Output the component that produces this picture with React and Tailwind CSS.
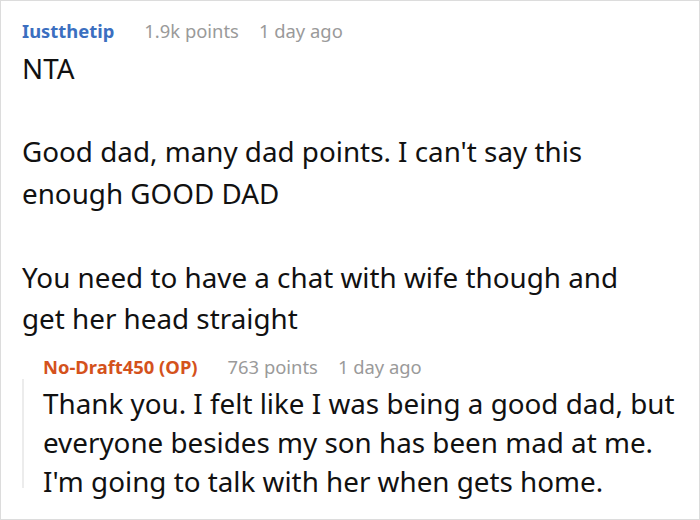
export default function App() {
  return (
    <div className="w-[700px] h-[520px] bg-white border border-[#dcdcdc] box-border overflow-hidden" style={{ fontFamily: '"Noto Sans", "Open Sans", sans-serif' }}>
      <div className="pl-[21px] pt-[16px]">
        <div className="flex items-baseline text-[18.4px] leading-[28px]">
          <span className="font-bold text-[#3b6fc0]">Iustthetip</span>
          <span className="ml-[30px] text-[#9a9a9a]">1.9k points</span>
          <span className="ml-[20px] text-[#9a9a9a]">1 day ago</span>
        </div>
        <div className="text-[27.8px] leading-[41.7px] text-[#111] mt-[3px]">
          <p>NTA</p>
          <p>&nbsp;</p>
          <p>Good dad, many dad points. I can't say this<br />enough GOOD DAD</p>
          <p>&nbsp;</p>
          <p>You need to have a chat with wife though and<br />get her head straight</p>
        </div>
        <div className="mt-[13px] flex">
          <div className="w-[2px] bg-[#ececec] mt-[26px] mb-[14px]" />
          <div className="pl-[19px]">
            <div className="flex items-baseline text-[18.4px] leading-[28px]">
              <span className="font-bold text-[#d4521c]">No-Draft450 (OP)</span>
              <span className="ml-[30px] text-[#9a9a9a]">763 points</span>
              <span className="ml-[20px] text-[#9a9a9a]">1 day ago</span>
            </div>
            <div className="text-[27.8px] leading-[39.2px] text-[#111] mt-[3px]">
              <p>Thank you. I felt like I was being a good dad, but<br />everyone besides my son has been mad at me.<br />I'm going to talk with her when gets home.</p>
            </div>
          </div>
        </div>
      </div>
    </div>
  );
}
